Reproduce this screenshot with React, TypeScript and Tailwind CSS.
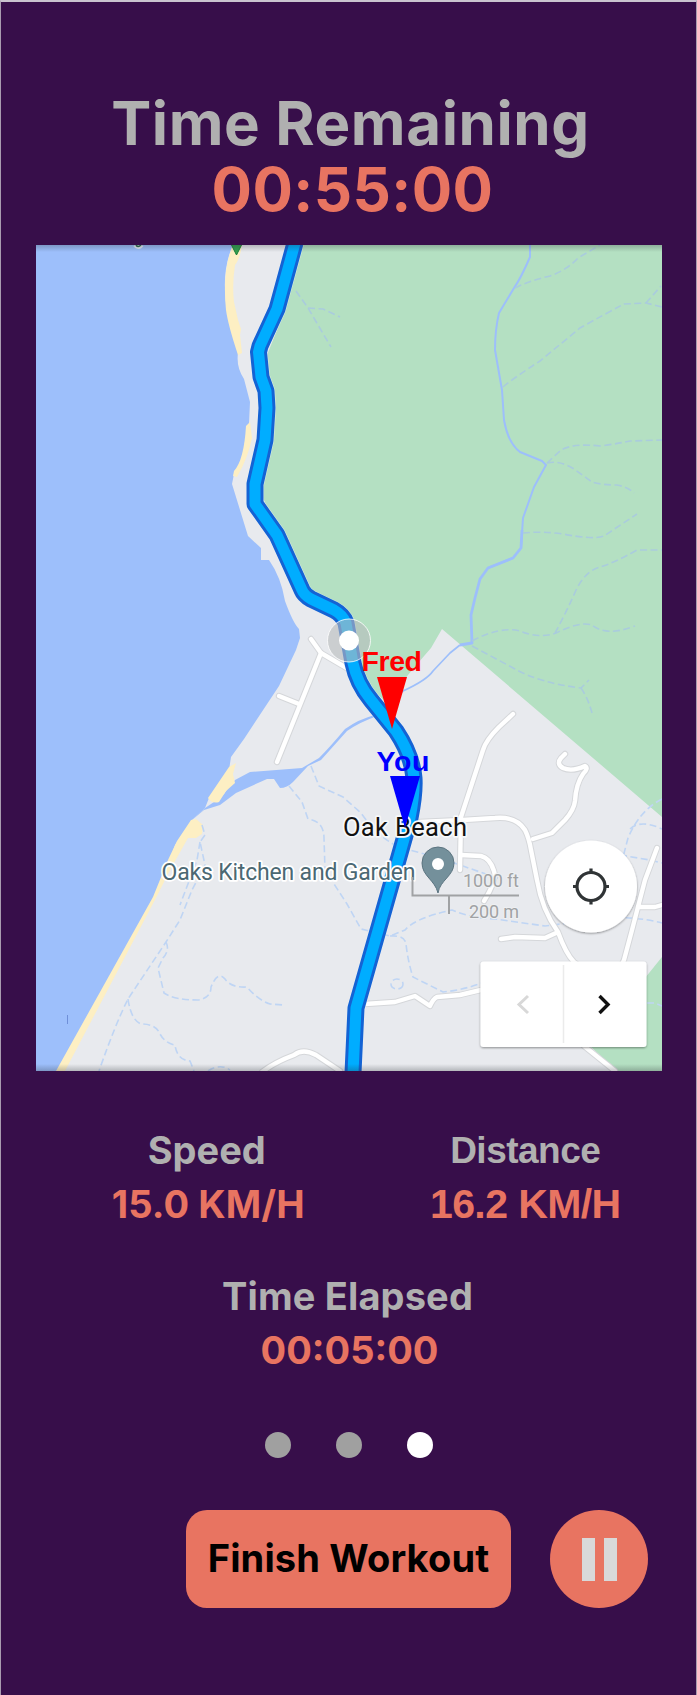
import React from "react";

const CASING = "#d5d7da";

const ROUTE =
  "M295 243 L277 309 L260 346 L258.500 352 L261 377 L266 391 L267 408 L265 440 L255 484 V504 L277 535 L302 590 Q304 595 311 599 L334 610 Q343 615 346 623 L353 663 Q357 683 371 700 L396 731 Q412 755 414 778 Q415 793 410 818 L356 1008 L353 1073";

const roads = [
  "M311 639 L321 653 L350 670",
  "M321 653 L277 762",
  "M279 696 L299 704",
  "M513 714 L499 727 Q486 740 483 750 L461 817 L460 870",
  "M420 822 L463 820 L495 818 Q516 816 525 830 Q529 838 531 850 L537 880 Q542 910 558 932 Q566 954 574 962 L605 985 Q618 975 624 960 L632 930 L645 880 L657 848",
  "M533 839 L552 833 L565 820 Q574 810 575 801 Q576 784 583 774 Q589 768 585 766 Q572 772 563 768 Q556 764 561 758 L565 754",
  "M461 855 L481 856 Q490 858 494 871 Q497 880 484 901",
  "M501 939 L515 937 L545 938 L556 933",
  "M638 907 L655 907 L662 905",
  "M365 1004 L395 1002 L415 996 L430 1006 Q433 999 437 997 L460 995 L485 989 L510 988",
  "M584 1046 L615 1071",
  "M262 1072 Q275 1062 294 1055 Q303 1048 316 1055 L340 1071",
];

const forestStreams = [
  "M296 291 L308 308 L331 347",
  "M308 308 L323 309 L340 317",
  "M515 288 Q528 281 550 276 Q567 270 578 258 L600 245",
  "M503 387 Q515 377 540 361 L580 328 Q605 314 624 304 L646 303 L662 307",
  "M646 303 L661 286",
  "M547 463 L561 450 Q574 443 600 446 Q616 444 630 441 L662 440",
  "M547 463 Q560 460 574 469 L592 482 Q602 485 617 485 Q628 487 634 493",
  "M523 533 Q542 531 563 534 Q594 540 604 536 L637 514",
  "M555 633 Q566 613 577 588 Q587 570 600 567 Q614 563 637 550 L662 550",
  "M472 641 Q500 626 520 631 Q540 639 556 633 Q580 621 592 625 Q606 637 635 626",
  "M472 646 L515 669 Q540 683 581 688 L589 680",
  "M581 688 Q588 698 592 713",
];

const lowlandStreams = [
  "M202 825 L205 835 L200 842 L205 865 L192 890 L180 920 L166 942 L128 999 Q115 1025 99 1071",
  "M200 842 L197 860 L180 905",
  "M166 942 Q170 950 163 958 L158 968 L164 993 Q174 1000 198 1000 Q211 998 211 987 Q218 970 225 979 Q231 988 247 987 Q258 1000 270 1004 L284 1005",
  "M128 999 Q131 1020 141 1024 Q155 1024 159 1032 Q164 1043 175 1045 Q177 1060 190 1061 L194 1071",
  "M208 1071 Q220 1063 230 1070",
  "M289 786 L302 802 L308 819 Q324 821 324 838 L325 870 L347 904 L361 929 L390 936 L405 930 Q415 918 452 910 Q470 918 495 919 L545 926 L600 919 Q630 915 662 923",
  "M311 766 L319 786 L343 797 L361 813 Q380 840 402 848 L440 858 L500 879",
  "M390 936 Q405 935 406 944 Q408 962 413 977 L443 992 Q463 990 482 983",
  "M662 799 Q640 810 628 838 L621 865",
  "M630 829 Q641 819 662 829",
  "M620 855 L650 860 L662 863",
  "M647 1003 L655 1003 L662 1006",
];

function WorkoutMap() {
  return (
    <svg viewBox="36 245 626 826" className="block h-[826px] w-[626px] font-normal" fill="none">
      <defs>
        <linearGradient id="topShade" x1="0" y1="0" x2="0" y2="1">
          <stop offset="0" stopColor="#20252b" stopOpacity="0.26" />
          <stop offset="1" stopColor="#20252b" stopOpacity="0" />
        </linearGradient>
        <filter id="lift" x="-20%" y="-20%" width="140%" height="150%">
          <feDropShadow dx="0" dy="1" stdDeviation="1.2" floodColor="#000" floodOpacity="0.4" />
        </filter>
      </defs>
      <rect x="36" y="245" width="626" height="826" fill="#e8eaee" />
      {/* woodland */}
      <path fill="#b4e0c2" d="M302 245 H662 V817 L442 629 L431 648 Q410 672 386 702 L370 688 L352 645 L335 615 L305 600 L272 520 L258 485 L270 435 L272 400 L265 360 L285 310 Z" />
      <path fill="#b4e0c2" d="M662 957 L590 1046 L617 1071 H662 Z" />
      {/* sea */}
      <path fill="#9dbffb" d="M36 245 H233 Q219 275 229 320 L238 353 Q236 367 244 379 L250 402 L249 424 L245 441 Q243 464 234 474 L232 484 L248 536 L261 548 V560 H269 Q281 577 285 601 Q293 623 299 629 L300 638 L296 650 L279 686 L244 739 L231 757 L229 770 L209 798 L205 808 L192 820 L175 845 L160 889 L57 1071 H36 Z" />
      <path fill="#9dbffb" d="M205 808 L217 800 L224 794 L229 787 L235 780 L250 772 L302 768 L319 758 Q330 747 345 729 Q359 719 375 715 L376 716.500 Q360 722 347 731 L321 760 L308 766 L293 782 Q287 788 280 788 L274 779 H267 L236 793 L220 805 L204 810 L192 820 Z" />
      {/* sand */}
      <path fill="#fdefc3" d="M233 245 H242 Q240 259 235 265 Q232 285 234 302 L238 320 L241 329 L240 335 L242 353 L238 355 Q228 325 226 310 Q222 270 233 245 Z" />
      <path fill="#fdefc3" d="M246 426 L250 422 L252 438 Q248 458 237 477 L233 476 L234 471 Q244 460 246 426 Z" />
      <path fill="#fdefc3" d="M236 763 L233 774 L235 783 L226 791 L219 802 Q212 804 208 798 L229 767 Z" />
      <path fill="#fdefc3" d="M191 820 L196 819 L203 825 L202 834 L196 838 L188 838 L170 870 L157 896 L65 1071 H56 L153 897 L168 860 L177 841 Z" />
      {/* smaller waterways */}
      <g stroke="#9dbffb" strokeLinejoin="round">
        <path strokeWidth="2" d="M530 245 V257 Q521 278 514 288 L499 313 Q495 330 495 350 L502 390 L504 420 Q508 443 520 452 L542 461 L546 465 L534 487 L523 518 L521 548 L513 558 L488 568" />
        <path strokeWidth="2.800" d="M522 530 L521 548 L513 558 L488 568 L480 579 Q475 597 471 615 L472 643 L460 645" />
        <path strokeWidth="1.7" d="M460 645 L450 653 L433 671 Q427 680 403 691 L376 715" />
      </g>
      <g stroke="#aaccdd" strokeWidth="1.6" strokeDasharray="7 3.5">
        {forestStreams.map((d) => <path key={d} d={d} />)}
      </g>
      <g stroke="#bfd5f4" strokeWidth="1.6" strokeDasharray="7 3.5">
        {lowlandStreams.map((d) => <path key={d} d={d} />)}
        <ellipse cx="397" cy="984" rx="6" ry="5" />
      </g>
      {/* roads */}
      <g stroke={CASING} strokeWidth="6.400" strokeLinecap="round" strokeLinejoin="round">
        {roads.map((d) => <path key={d} d={d} />)}
      </g>
      <g stroke="#fff" strokeWidth="4.400" strokeLinecap="round" strokeLinejoin="round">
        {roads.map((d) => <path key={d} d={d} />)}
      </g>
      {/* route */}
      <g strokeLinejoin="round">
        <path stroke="#eef1f3" strokeOpacity="0.7" strokeWidth="18" d={ROUTE} />
        <path stroke="#1463d4" strokeWidth="17" d={ROUTE} />
        <path stroke="#00adff" strokeWidth="11" d={ROUTE} />
      </g>
      {/* current waypoint */}
      <circle cx="349" cy="640.500" r="21.500" fill="#b7bbbd" fillOpacity="0.6" stroke="#fff" strokeOpacity="0.8" />
      <circle cx="349" cy="640.500" r="10" fill="#fff" />
      {/* place labels */}
      <g style={{ fontFamily: "Roboto, sans-serif" }} stroke="#fff" strokeWidth="3.500" strokeLinejoin="round" paintOrder="stroke">
        <text x="343" y="836" fontSize="25.500" fill="#111" textLength="124" stroke="#f6f8fa">Oak Beach</text>
        <text x="161.500" y="880" fontSize="23" fill="#4b6873" textLength="254">Oaks Kitchen and Garden</text>
      </g>
      <g style={{ fontFamily: "Roboto, sans-serif" }} fontSize="18" fill="#a0a2a4" stroke="#eef0f2" strokeWidth="2" paintOrder="stroke">
        <text x="463" y="887" textLength="56">1000 ft</text>
        <text x="469" y="917.500" textLength="50">200 m</text>
      </g>
      <path stroke="#a0a2a4" strokeWidth="2" d="M412.500 877 V895.500 H519 M449 895 V914" />
      {/* place pin */}
      <path fill="#74909b" stroke="#5b7480" d="M438 893 C435 880 422 876 422 863 A16 16 0 0 1 454 863 C454 876 440 880 438 893 Z" />
      <circle cx="438" cy="864" r="6" fill="#fff" />
      {/* runners */}
      <path fill="#f00" d="M377 677 H407 L392 729 Z" />
      <path fill="#00f" d="M390 776 H420 L405 828 Z" />
      <g style={{ fontFamily: "'Liberation Sans', sans-serif" }} fontSize="28.500" fontWeight="700">
        <text x="361.500" y="671" fill="#f00" textLength="60.500">Fred</text>
        <text x="376.500" y="771" fill="#00f" textLength="53">You</text>
      </g>
      {/* bird and trailhead markers cut by the frame */}
      <path stroke="#e2eaf5" strokeWidth="4" d="M135 245 Q138 249 142 245" />
      <path stroke="#2c6b4a" strokeWidth="1.500" d="M136 245 Q138 248 141 245" />
      <path fill="#34a050" stroke="#188038" d="M231 244 L236.500 255 L242 244" />
      <path stroke="#6f8fd8" d="M67.500 1015 V1024" />
      {/* controls */}
      <circle cx="591" cy="886.500" r="46" fill="#fff" filter="url(#lift)" />
      <circle cx="591" cy="886.500" r="14" stroke="#303436" strokeWidth="3.200" />
      <path stroke="#303436" strokeWidth="3.200" d="M591 868.500 V873 M591 900 V904.500 M573 886.500 H577.500 M604.500 886.500 H609" />
      <rect x="480.500" y="961.500" width="166" height="85.500" rx="3" fill="#fff" filter="url(#lift)" />
      <path stroke="#ebebeb" strokeWidth="1.500" d="M563.500 965 V1043" />
      <path stroke="#d8d8d8" strokeWidth="3" d="M528 996 L519 1004.500 L528 1013" />
      <path stroke="#111" strokeWidth="3.400" d="M599.500 996 L608 1004.500 L599.500 1013" />
      <rect x="36" y="245" width="626" height="7" fill="url(#topShade)" />
      <rect x="36" y="1064" width="626" height="7" fill="url(#topShade)" transform="rotate(180 349 1067.500)" />
    </svg>
  );
}

export default function App() {
  return (
    <main className="flex h-[1695px] w-[697px] flex-col border-x border-t-2 border-[#a99bb0] border-t-[#c9c2cf] bg-[#370e4a] font-['Inter',sans-serif] font-bold">
      <header className="flex h-[243px] flex-col items-center whitespace-nowrap pt-[88px] pl-[4px] text-[60px] leading-[66px]">
        <h1 className="tracking-[0.6px] text-[#b0b0b0]">Time Remaining</h1>
        <p className="pl-[4px] tracking-[0.4px] text-[#e87461]">00:55:00</p>
      </header>
      <section className="ml-[35px]">
        <WorkoutMap />
      </section>
      <section className="mt-[52px] grid grid-cols-2 whitespace-nowrap text-center text-[38px] leading-[54px]">
        <div className="ml-[67px]">
          <h2 className="pr-[3px] text-[#b0b0b0]">Speed</h2>
          <p className="tracking-[0.1px] text-[#e87461]">15.0 KM/H</p>
        </div>
        <div className="pl-[6px] pt-[2px] font-['Liberation_Sans',sans-serif]">
          <h2 className="text-[37px] leading-[52px] tracking-[-0.5px] text-[#b0b0b0]">Distance</h2>
          <p className="text-[41px] tracking-[-0.6px] text-[#e87461]">16.2 KM/H</p>
        </div>
      </section>
      <section className="mt-[38px] text-center text-[38px] leading-[54px]">
        <h2 className="pr-[2px] tracking-[0.15px] text-[#b0b0b0]">Time Elapsed</h2>
        <p className="pl-[2px] text-[#e87461]">00:05:00</p>
      </section>
      <nav className="mt-[55px] flex justify-center gap-[45px]">
        <span className="size-[26px] rounded-full bg-[#a0a0a0]" />
        <span className="size-[26px] rounded-full bg-[#a0a0a0]" />
        <span className="size-[26px] rounded-full bg-white" />
      </nav>
      <footer className="mt-[52px] ml-[185px] flex gap-[39px]">
        <button className="h-[98px] w-[325px] whitespace-nowrap rounded-[21px] bg-[#e87461] pb-[2px] text-[38px] tracking-[0.15px] text-black">Finish Workout</button>
        <button className="flex size-[98px] items-center justify-center gap-[9px] rounded-full bg-[#e87461]">
          <span className="h-[43px] w-[13px] bg-[#d9d9d9]" />
          <span className="h-[43px] w-[13px] bg-[#d9d9d9]" />
        </button>
      </footer>
    </main>
  );
}
